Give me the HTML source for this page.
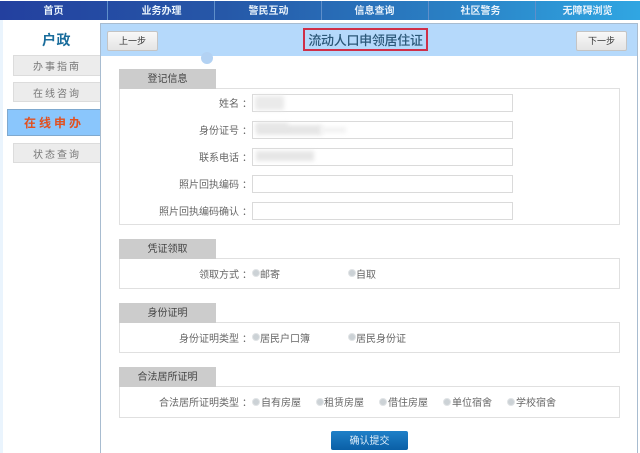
<!DOCTYPE html>
<html lang="zh"><head><meta charset="utf-8"><style>
html,body{margin:0;padding:0}
body{width:640px;height:453px;position:relative;overflow:hidden;background:#fff;font-family:"Liberation Sans","Noto Sans CJK SC",sans-serif;font-size:10px;color:#666;filter:blur(.35px)}
div,span,i{position:absolute;box-sizing:border-box;white-space:nowrap}
b{font-family:"Liberation Sans","Noto Sans CJK TC",sans-serif;font-weight:normal;position:relative;left:3px}
.nav{top:1px;left:0;width:640px;height:19px;background:linear-gradient(90deg,#23409f 0%,#2658a8 35%,#2a80c4 70%,#30a6e2 100%)}
.nav span{top:0;height:19px;line-height:21px;color:#e8f2fb;text-align:center;font-weight:bold;font-size:10px;width:107px}
.nav i{top:0;width:1px;height:19px;background:#5f8fca}
.side{left:13px;width:88px;height:21px;background:#ececec;border:1px solid #dcdcdc;text-align:center;line-height:23px;font-size:10px;letter-spacing:2px;color:#777}
.panel{left:100px;top:23px;width:538px;height:430px;border:1px solid #a8bcd0;border-bottom:0;background:#fff}
.bar{left:101px;top:24px;width:536px;height:32px;background:#b5d9fb}
.btn{top:31px;width:51px;height:20px;background:linear-gradient(#f8f8f8,#e4e4e4);border:1px solid #c4c4c4;border-radius:2px;text-align:center;line-height:18px;font-size:9px;color:#333}
.tab{left:119px;width:97px;height:20px;background:#cccccc;text-align:center;line-height:21px;color:#444;font-size:10px}
.box{left:119px;width:501px;border:1px solid #e0e0e0;background:#fff}
.lab{right:391px;color:#666;line-height:12px;font-size:10px}
.inp{left:252px;width:261px;height:18px;border:1px solid #dadada;background:#fff}
.blur{background:#e6e6e6;filter:blur(2px)}
.r{width:8px;height:8px;border-radius:50%;background:#ccd2d6;border:1px solid #e0e3e5}
.t{line-height:12px;color:#666;font-size:10px}
</style></head><body>
<div class="nav">
<span style="left:0">首页</span><i style="left:107px"></i>
<span style="left:108px">业务办理</span><i style="left:214px"></i>
<span style="left:215px">警民互动</span><i style="left:321px"></i>
<span style="left:321px">信息查询</span><i style="left:428px"></i>
<span style="left:427px">社区警务</span><i style="left:535px"></i>
<span style="left:534px">无障碍浏览</span>
</div>
<div style="left:0;top:20px;width:3px;height:433px;background:#eaf4fd"></div>
<div style="left:42px;top:31px;font-size:14px;font-weight:bold;color:#1a6d9c;line-height:18px;letter-spacing:.5px">户政</div>
<div class="side" style="top:55px">办事指南</div>
<div class="side" style="top:82px;height:20px">在线咨询</div>
<div class="side" style="top:143px;height:20px">状态查询</div>
<div style="left:7px;top:109px;width:94px;height:27px;background:#8ac6fc;border:1px solid #7fa9cf;text-align:center;line-height:27px;font-size:12px;font-weight:bold;letter-spacing:3px;color:#e2501f">在线申办</div>
<div class="panel"></div>
<div class="bar"></div>
<div class="btn" style="left:107px">上一步</div>
<div class="btn" style="left:576px">下一步</div>
<div style="left:303px;top:28px;width:125px;height:23px;border:2px solid #cf2f48;text-align:center;line-height:21px;font-size:13px;letter-spacing:-.3px;color:#2c5878;font-weight:500">流动人口申领居住证</div>
<div style="left:201px;top:52px;width:12px;height:12px;border-radius:50%;background:#b3d2f3"></div>

<div class="box" style="top:88px;height:137px"></div>
<div class="tab" style="top:69px">登记信息</div>
<div class="lab" style="top:99px">姓名<b>：</b></div><div class="inp" style="top:94px"></div>
<div class="lab" style="top:126px">身份证号<b>：</b></div><div class="inp" style="top:121px"></div>
<div class="lab" style="top:153px">联系电话<b>：</b></div><div class="inp" style="top:148px"></div>
<div class="lab" style="top:180px">照片回执编码<b>：</b></div><div class="inp" style="top:175px"></div>
<div class="lab" style="top:207px">照片回执编码确认<b>：</b></div><div class="inp" style="top:202px"></div>
<div class="blur" style="left:255px;top:96px;width:29px;height:14px;background:#eaeaea"></div>
<div class="blur" style="left:256px;top:125px;width:66px;height:10px"></div>
<div class="blur" style="left:256px;top:123px;width:32px;height:6px"></div>
<div class="blur" style="left:320px;top:127px;width:26px;height:6px;background:#f2f2f2"></div>
<div class="blur" style="left:256px;top:151px;width:58px;height:10px"></div>

<div class="box" style="top:258px;height:31px"></div>
<div class="tab" style="top:239px">凭证领取</div>
<div class="lab" style="top:270px">领取方式<b>：</b></div>
<i class="r" style="left:252px;top:269px"></i><div class="t" style="left:260px;top:270px">邮寄</div>
<i class="r" style="left:348px;top:269px"></i><div class="t" style="left:356px;top:270px">自取</div>

<div class="box" style="top:322px;height:31px"></div>
<div class="tab" style="top:303px">身份证明</div>
<div class="lab" style="top:334px">身份证明类型<b>：</b></div>
<i class="r" style="left:252px;top:333px"></i><div class="t" style="left:260px;top:334px">居民户口簿</div>
<i class="r" style="left:348px;top:333px"></i><div class="t" style="left:356px;top:334px">居民身份证</div>

<div class="box" style="top:386px;height:32px"></div>
<div class="tab" style="top:367px">合法居所证明</div>
<div class="lab" style="top:398px">合法居所证明类型<b>：</b></div>
<i class="r" style="left:252px;top:398px"></i><div class="t" style="left:261px;top:398px">自有房屋</div>
<i class="r" style="left:316px;top:398px"></i><div class="t" style="left:324px;top:398px">租赁房屋</div>
<i class="r" style="left:379px;top:398px"></i><div class="t" style="left:388px;top:398px">借住房屋</div>
<i class="r" style="left:443px;top:398px"></i><div class="t" style="left:452px;top:398px">单位宿舍</div>
<i class="r" style="left:507px;top:398px"></i><div class="t" style="left:516px;top:398px">学校宿舍</div>

<div style="left:331px;top:431px;width:77px;height:19px;border-radius:2px;background:linear-gradient(#1f80c8,#0a5fa6);color:#dfeefa;text-align:center;line-height:21px;font-size:10px">确认提交</div>
</body></html>
